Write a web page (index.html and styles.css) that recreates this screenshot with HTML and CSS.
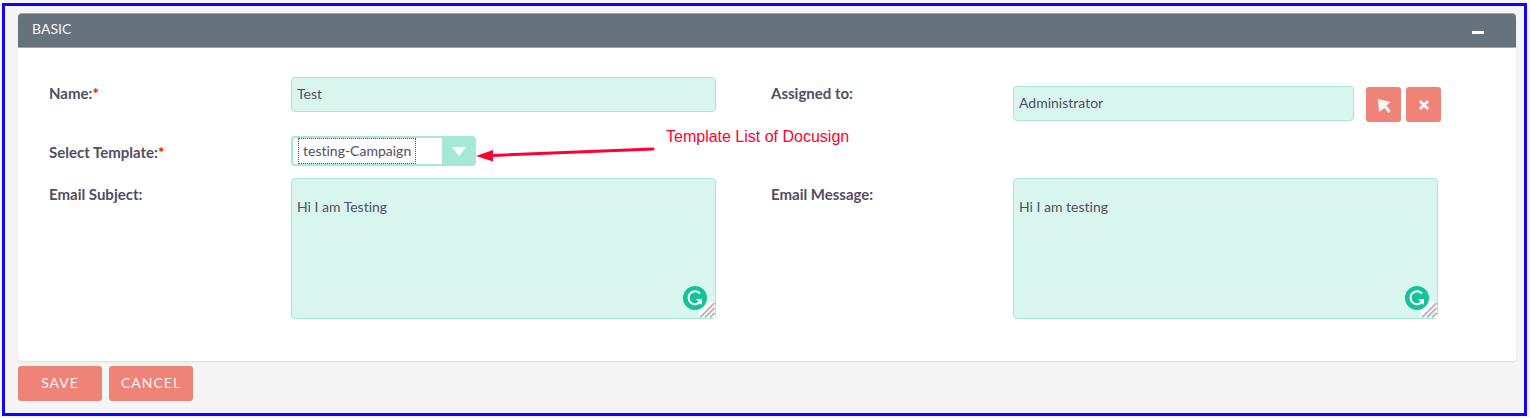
FILE: index.html
```html
<!DOCTYPE html>
<html lang="en">
<head>
    <meta charset="UTF-8">
    <meta name="viewport" content="width=device-width, initial-scale=1.0">
    <title>Basic</title>
    <link rel="stylesheet" href="styles.css">
</head>
<body>
    <form class="frame">
        <section class="panel">
            <header class="panel-header">
                <h1>BASIC</h1>
                <button type="button" class="collapse" aria-label="Collapse">
                    <svg width="12" height="3" viewBox="0 0 12 3"><rect width="12" height="3" fill="#fff"/></svg>
                </button>
            </header>

            <div class="fields">
                <div class="field">
                    <label for="name">Name:<span class="required">*</span></label>
                    <div class="control"><input id="name" type="text" value="Test"></div>
                </div>
                <div class="field">
                    <label for="assigned">Assigned to:</label>
                    <div class="control assigned">
                        <input id="assigned" type="text" value="Administrator">
                        <button type="button" class="icon-btn" aria-label="Select user">
                            <svg width="14" height="16" viewBox="0 0 14 16"><path d="M1 2L13.500 5L9.500 8.500L13.500 14L11.500 16L7.500 11L2 15Z" fill="#f5f5f5"/></svg>
                        </button>
                        <button type="button" class="icon-btn" aria-label="Clear user">
                            <svg width="12" height="12" viewBox="0 0 12 12"><path d="M2 2L10 10M10 2L2 10" stroke="#f5f5f5" stroke-width="3"/></svg>
                        </button>
                    </div>
                </div>

                <div class="field wide">
                    <label for="template">Select Template:<span class="required">*</span></label>
                    <div class="control template">
                        <select id="template">
                            <option>testing-Campaign</option>
                        </select>
                        <span class="focus-ring"></span>
                        <svg class="caret" width="14" height="9" viewBox="0 0 14 9"><path d="M0 0H14L7 9Z" fill="#fff"/></svg>
                        <div class="note">
                            <svg width="180" height="20" viewBox="0 0 180 20">
                                <path d="M16 12.500L177 6" stroke="#ff0033" stroke-width="3" stroke-linecap="round"/>
                                <path d="M0 13L17 7V18.500Z" fill="#ff0033"/>
                            </svg>
                            <span>Template List of Docusign</span>
                        </div>
                    </div>
                </div>

                <div class="field">
                    <label for="subject">Email Subject:</label>
                    <div class="control message">
                        <textarea id="subject">Hi I am Testing</textarea>
                        <svg class="grip" width="16" height="16" viewBox="0 0 16 16">
                            <rect width="16" height="16" fill="#fff"/>
                            <path d="M1 15.500L15.500 1M6 15.500L15.500 6M11 15.500L15.500 11" stroke="#b8b8b8" stroke-width="2"/>
                        </svg>
                        <svg class="badge" width="24" height="24" viewBox="0 0 24 24">
                            <circle cx="12" cy="12" r="12" fill="#15c39a"/>
                            <path d="M17 7.500A6.500 6.500 0 1 0 17 16" fill="none" stroke="#fff" stroke-width="2"/>
                            <path d="M13 13H19V19L17 17L15 15Z" fill="#fff"/>
                        </svg>
                    </div>
                </div>
                <div class="field">
                    <label for="message">Email Message:</label>
                    <div class="control message">
                        <textarea id="message">Hi I am testing</textarea>
                        <svg class="grip" width="16" height="16" viewBox="0 0 16 16">
                            <rect width="16" height="16" fill="#fff"/>
                            <path d="M1 15.500L15.500 1M6 15.500L15.500 6M11 15.500L15.500 11" stroke="#b8b8b8" stroke-width="2"/>
                        </svg>
                        <svg class="badge" width="24" height="24" viewBox="0 0 24 24">
                            <circle cx="12" cy="12" r="12" fill="#15c39a"/>
                            <path d="M17 7.500A6.500 6.500 0 1 0 17 16" fill="none" stroke="#fff" stroke-width="2"/>
                            <path d="M13 13H19V19L17 17L15 15Z" fill="#fff"/>
                        </svg>
                    </div>
                </div>
            </div>
        </section>

        <div class="actions">
            <button type="button" class="btn">SAVE</button>
            <button type="button" class="btn">CANCEL</button>
        </div>
    </form>
</body>
</html>
```

FILE: styles.css
```css
* { box-sizing: border-box; }
body {
    margin: 3px 3px 2px 2px;
    background: #f5f5f5;
    color: #534d64;
    font: 15px/20px Lato, sans-serif;
    font-variant-ligatures: none;
}
.frame {
    border: 3px solid #1400ff;
    padding: 7px 8px 12px 13px;
}

.panel {
    background: #fff;
    border-radius: 4px;
    box-shadow: 0 1px 2px rgba(0, 0, 0, 0.1);
}
.panel-header {
    display: flex;
    justify-content: space-between;
    align-items: center;
    height: 35px;
    padding: 0 32px 0 14px;
    background: #66727d;
    border: 1px solid #a0a8af;
    border-width: 1px 0;
    border-radius: 4px 4px 0 0;
}
.panel-header h1 {
    margin: 0 0 3px;
    color: #f5f5f5;
    font-size: 14px;
    font-weight: 400;
}
.collapse {
    display: flex;
    padding: 3px 0 0;
    border: 0;
    background: none;
}

.fields {
    display: grid;
    grid-template-columns: 1fr 1fr;
    padding: 29px 23px 42px 31px;
}
.field {
    display: grid;
    grid-template-columns: 242fr 425fr 55fr;
    align-items: start;
}
.wide { grid-column: 1 / -1; grid-template-columns: 242fr 1202fr; }
label { padding-top: 6px; font-weight: 700; }
.required { color: #f00; }
.control { position: relative; display: flex; }

input, textarea {
    width: 100%;
    height: 35px;
    padding: 0 5px 2px;
    background: #d8f5ee;
    border: 1px solid #a5e8d6;
    border-radius: 4px;
    outline: none;
    color: #534d64;
    font: inherit;
    font-size: 14px;
}
textarea {
    height: 141px;
    padding-top: 18px;
    resize: none;
}
.field:first-child { height: 59px; }
.assigned {
    gap: 5px;
    padding-top: 9px;
    margin-right: -3px;
}
.assigned input { flex: 1; min-width: 0; margin-right: 7px; }
.icon-btn {
    display: flex;
    align-items: center;
    justify-content: center;
    width: 35px;
    height: 35px;
    margin-top: 1px;
    padding: 0;
    background: #f08377;
    border: 0;
    border-radius: 3px;
}

.template { height: 42px; }
select {
    appearance: none;
    width: 185px;
    height: 30px;
    padding: 0 36px 0 10px;
    background: linear-gradient(#a5e8d6, #a5e8d6) right / 32px 100% no-repeat #fff;
    border: 2px solid #a5e8d6;
    border-radius: 4px;
    outline: none;
    color: #534d64;
    font: inherit;
    font-size: 14px;
}
.focus-ring {
    position: absolute;
    top: 2px;
    left: 7px;
    width: 118px;
    height: 26px;
    border: 1px dotted #534d64;
    pointer-events: none;
}
.caret {
    position: absolute;
    top: 11px;
    left: 161px;
    pointer-events: none;
}
.note {
    position: absolute;
    top: -9px;
    left: 185px;
    display: flex;
    gap: 10px;
    color: #ff0033;
    font: 16px/20px "Liberation Sans", sans-serif;
    white-space: nowrap;
}
.note svg { margin-top: 16px; }

.badge {
    position: absolute;
    right: 9px;
    bottom: 9px;
}
.grip {
    position: absolute;
    right: 1px;
    bottom: 1px;
}

.actions {
    display: flex;
    gap: 7px;
    padding-top: 5px;
}
.btn {
    min-width: 84px;
    height: 35px;
    padding: 0 10px 2px;
    background: #f08377;
    border: 0;
    border-radius: 3px;
    color: #f5f5f5;
    font: inherit;
    font-size: 14px;
    letter-spacing: 1px;
}
```
